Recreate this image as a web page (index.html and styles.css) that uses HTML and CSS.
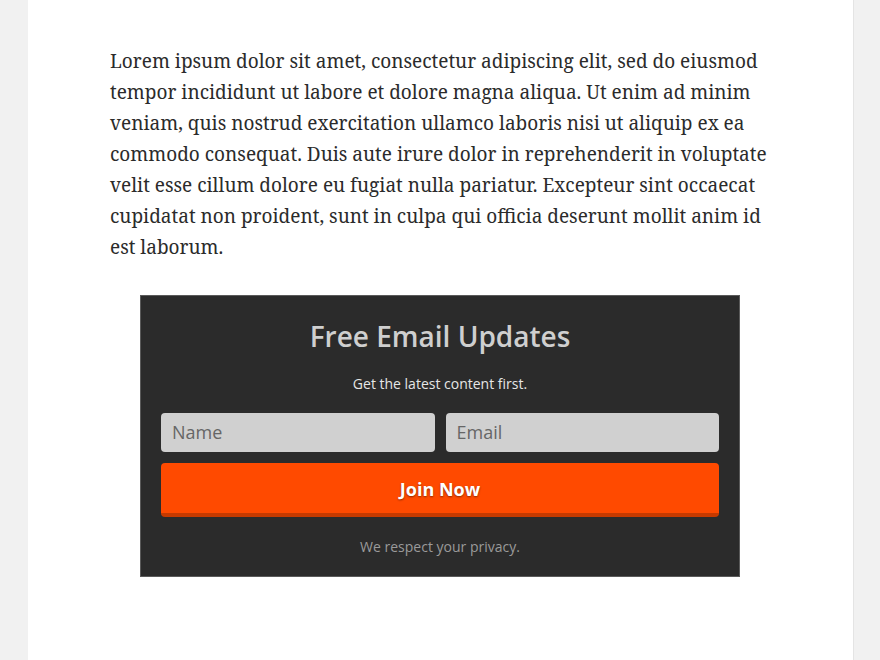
FILE: index.html
```html
<!DOCTYPE html>
<html>
<head>
<meta charset="utf-8">
<link rel="stylesheet" href="styles.css">
</head>
<body>
<div class="page">
  <main class="content">
    <p class="lead">Lorem ipsum dolor sit amet, consectetur adipiscing elit, sed do eiusmod tempor incididunt ut labore et dolore magna aliqua. Ut enim ad minim veniam, quis nostrud exercitation ullamco laboris nisi ut aliquip ex ea commodo consequat. Duis aute irure dolor in reprehenderit in voluptate velit esse cillum dolore eu fugiat nulla pariatur. Excepteur sint occaecat cupidatat non proident, sunt in culpa qui officia deserunt mollit anim id est laborum.</p>
    <form class="optin">
      <h2 class="optin-title">Free Email Updates</h2>
      <p class="optin-sub">Get the latest content first.</p>
      <div class="optin-fields">
        <input class="optin-input" type="text" placeholder="Name">
        <input class="optin-input" type="text" placeholder="Email">
      </div>
      <button class="optin-btn" type="button">Join Now</button>
      <p class="optin-privacy">We respect your privacy.</p>
    </form>
  </main>
</div>
</body>
</html>
```
FILE: styles.css
```css
html, body { margin: 0; padding: 0; }
body { background: #f1f1f1; height: 660px; overflow: hidden; }
.page { padding-left: 28px; }
.content {
  width: 826px;
  box-sizing: border-box;
  background: #fff;
  border-right: 1px solid #e4e4e4;
  min-height: 660px;
  padding: 46px 0 0 82px;
}
.lead {
  margin: 0;
  width: 668px;
  font-family: "Noto Serif", "DejaVu Serif", serif;
  font-size: 19px;
  line-height: 31px;
  color: #2b2b2b;
}
.optin {
  margin: 32px 0 0 30px;
  width: 600px;
  box-sizing: border-box;
  background: #2b2b2b;
  border: 1px solid #5a5a5a;
  padding: 20px 20px 19px;
  font-family: "Open Sans", sans-serif;
  text-align: center;
}
.optin-title {
  margin: 0;
  font-size: 28px;
  font-weight: 600;
  line-height: 40px;
  color: #cfcfcf;
}
.optin-sub {
  margin: 18px 0 0;
  font-size: 14px;
  line-height: 20px;
  color: #e6e6e6;
}
.optin-fields {
  display: flex;
  gap: 11px;
  margin-top: 19px;
}
.optin-input {
  flex: 1;
  min-width: 0;
  height: 39px;
  box-sizing: border-box;
  border: none;
  border-radius: 4px;
  background: #d0d0d0;
  padding: 0 11px 2px;
  font-family: "Open Sans", sans-serif;
  font-size: 18px;
  color: #555;
  outline: none;
}
.optin-input::placeholder { color: #666; }
.optin-btn {
  display: block;
  width: 100%;
  height: 54px;
  margin-top: 11px;
  border: none;
  border-bottom: 4px solid #c63a00;
  border-radius: 4px;
  background: #ff4a00;
  font-family: "Open Sans", sans-serif;
  font-size: 18px;
  font-weight: 700;
  color: #fff;
  text-shadow: 0 1px 2px rgba(0,0,0,0.45);
  padding: 2px 0 0;
}
.optin-privacy {
  margin: 20px 0 0;
  font-size: 14px;
  line-height: 20px;
  color: #9a9a9a;
}
```
